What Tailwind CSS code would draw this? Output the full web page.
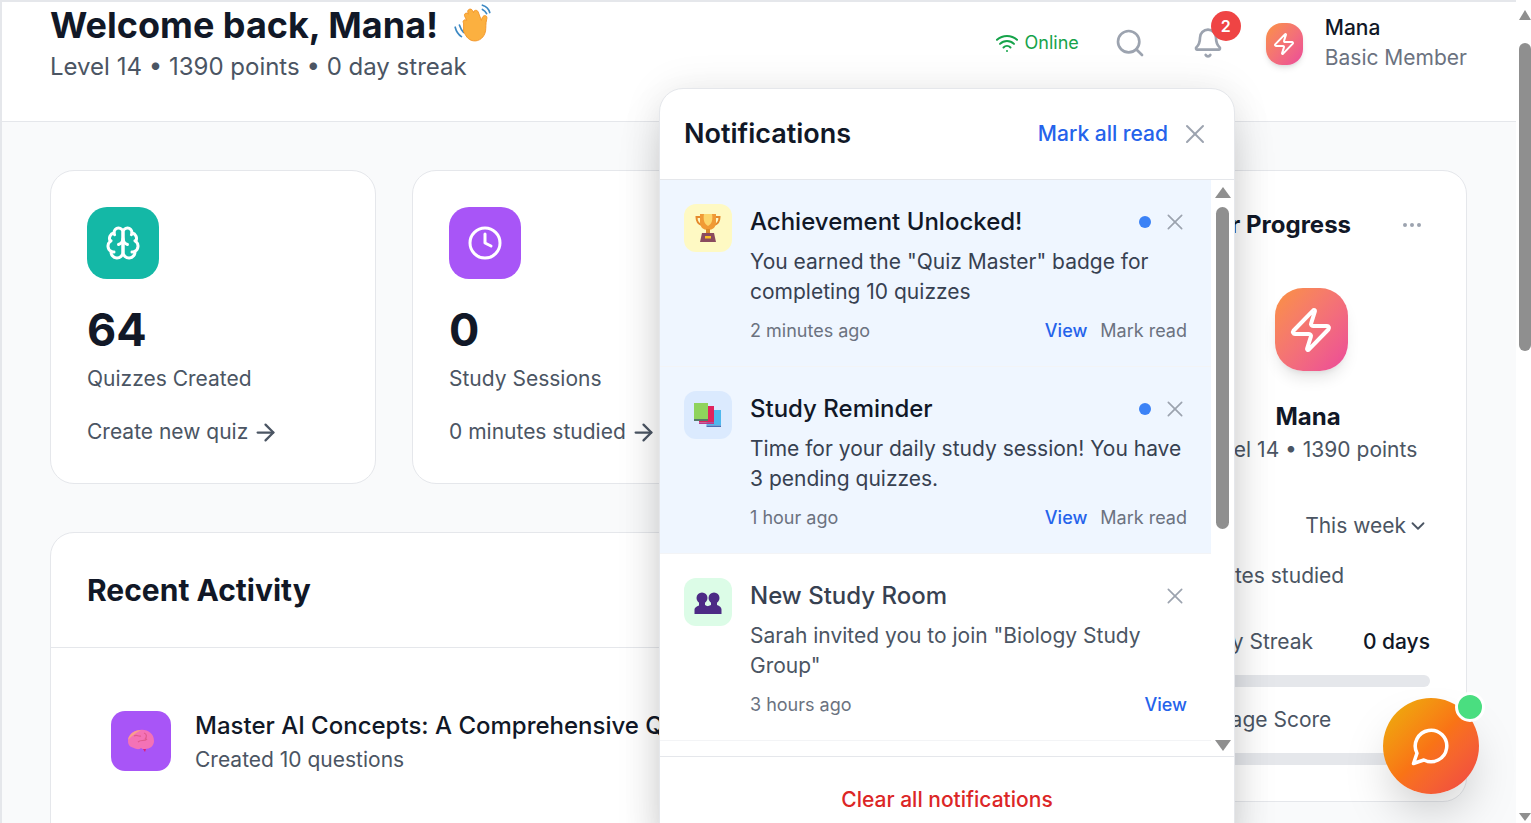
<!DOCTYPE html>
<html lang="en">

<head>
    <meta charset="UTF-8">
    <meta name="viewport" content="width=device-width, initial-scale=1.0">
    <title>Dashboard</title>
    <script src="https://cdn.jsdelivr.net/npm/@tailwindcss/browser@4"></script>
</head>

<body class="h-[823px] w-[1531px] overflow-hidden bg-white font-['Inter',sans-serif] text-[#111827]">
    <div class="relative flex h-[823px] w-[1531px] overflow-hidden">

        <!-- Main page -->
        <div class="h-[823px] w-[1516px] shrink-0 overflow-hidden border-t-2 border-l-2 border-t-[#e5e7eb] border-l-[#e5e7eb] bg-[#f9fafb]">
            <header class="flex h-[120px] items-start justify-between border-b border-[#e5e7eb] bg-white pr-[49px] pl-[48px]">
                <div>
                    <h1 class="flex h-[46px] items-center text-[36px] leading-[46px] font-bold text-[#111827]">
                        Welcome back, Mana!
                        <svg class="mt-[-5px] ml-[13px] h-[44px] w-[44px]" viewBox="0 0 42 42">
                            <path d="M4 25c1 4 3 7 6 9M8 23c1 3 2 5 4 7" fill="none" stroke="#3b88c3" stroke-width="1.6" stroke-linecap="round" />
                            <path d="M30 4c3 1 6 3 7 7M30 8c2 1 3 2 4 4" fill="none" stroke="#3b88c3" stroke-width="1.6" stroke-linecap="round" />
                            <path d="M12 21c-1.500-2 1-4 3-2.500l-2-4c-1-2.500 2-4 3.500-2l-.5-2c-.5-2.500 3-4 4.500-1.500l1 2c0-2.500 3.500-3 4.500-.5l3 8c.5-3 2-5 4-4.500 1.500.5 1.500 2 1 4-1 3.500-.5 7-1 10.500-1 6-6 10.500-12 9.500-5-1-7-5-9-9z" fill="#fbb040" stroke="#f19020" stroke-width=".8" />
                        </svg>
                    </h1>
                    <p class="mt-[-3px] text-[24px] leading-[44px] text-[#4b5563]">Level 14 • 1390 points • 0 day streak</p>
                </div>
                <div class="flex items-start pt-[6px]">
                    <div class="mt-[23px] flex items-center gap-[6px] text-[#16a34a]">
                        <svg class="h-[24px] w-[24px]" viewBox="0 0 24 24" fill="none" stroke="currentColor" stroke-width="2" stroke-linecap="round" stroke-linejoin="round">
                            <path d="M12 20h.01" />
                            <path d="M2 8.820a15 15 0 0 1 20 0" />
                            <path d="M5 12.859a10 10 0 0 1 14 0" />
                            <path d="M8.500 16.429a5 5 0 0 1 7 0" />
                        </svg>
                        <span class="text-[18px] leading-[24px]">Online</span>
                    </div>
                    <svg class="mt-[19px] ml-[35px] h-[32px] w-[32px] text-[#9ca3af]" viewBox="0 0 24 24" fill="none" stroke="currentColor" stroke-width="2" stroke-linecap="round" stroke-linejoin="round">
                        <path d="m21 21-4.340-4.340" />
                        <circle cx="11" cy="11" r="8" />
                    </svg>
                    <div class="relative mt-[19px] ml-[46px]">
                        <svg class="h-[32px] w-[32px] text-[#9ca3af]" viewBox="0 0 24 24" fill="none" stroke="currentColor" stroke-width="2" stroke-linecap="round" stroke-linejoin="round">
                            <path d="M10.268 21a2 2 0 0 0 3.464 0" />
                            <path d="M3.262 15.326A1 1 0 0 0 4 17h16a1 1 0 0 0 .74-1.673C19.410 13.956 18 12.499 18 8A6 6 0 0 0 6 8c0 4.499-1.411 5.956-2.738 7.326" />
                        </svg>
                        <span class="absolute top-[-16px] left-[19px] flex h-[30px] w-[30px] items-center justify-center rounded-full bg-[#ef4444] text-[16px] font-semibold text-white">2</span>
                    </div>
                    <div class="mt-[15px] ml-[42px] flex h-[42px] w-[37px] items-center justify-center rounded-[16px] bg-gradient-to-br from-[#fb923c] to-[#ec4899] shadow-md">
                        <svg class="h-[24px] w-[24px] text-white" viewBox="0 0 24 24" fill="none" stroke="currentColor" stroke-width="2" stroke-linecap="round" stroke-linejoin="round">
                            <path d="M4 14a1 1 0 0 1-.78-1.630l9.900-10.200a.5.5 0 0 1 .86.460l-1.920 6.020A1 1 0 0 0 13 10h7a1 1 0 0 1 .78 1.630l-9.900 10.200a.5.5 0 0 1-.86-.460l1.920-6.020A1 1 0 0 0 11 14z" />
                        </svg>
                    </div>
                    <div class="mt-[5px] ml-[22px]">
                        <p class="text-[21px] leading-[30px] font-medium text-[#111827]">Mana</p>
                        <p class="text-[21px] leading-[30px] text-[#6b7280]">Basic Member</p>
                    </div>
                </div>
            </header>

            <main class="grid grid-cols-[1063px_318px] gap-x-[36px] pt-[48px] pl-[48px]">
                <div>
                    <div class="grid grid-cols-[326px_326px_326px] gap-[36px]">
                        <div class="h-[314px] rounded-[24px] border border-[#e5e7eb] bg-white p-[36px]">
                            <div class="flex h-[72px] w-[72px] items-center justify-center rounded-[20px] bg-[#14b8a6]">
                                <svg class="h-[36px] w-[36px] text-white" viewBox="0 0 24 24" fill="none" stroke="currentColor" stroke-width="2" stroke-linecap="round" stroke-linejoin="round">
                                    <path d="M12 5a3 3 0 1 0-5.997.125 4 4 0 0 0-2.526 5.770 4 4 0 0 0 .556 6.588A4 4 0 1 0 12 18Z" />
                                    <path d="M12 5a3 3 0 1 1 5.997.125 4 4 0 0 1 2.526 5.770 4 4 0 0 1-.556 6.588A4 4 0 1 1 12 18Z" />
                                    <path d="M15 13a4.500 4.500 0 0 1-3-4 4.500 4.500 0 0 1-3 4" />
                                    <path d="M17.599 6.500a3 3 0 0 0 .399-1.375" />
                                    <path d="M6.003 5.125A3 3 0 0 0 6.401 6.500" />
                                    <path d="M3.477 10.896a4 4 0 0 1 .585-.396" />
                                    <path d="M19.938 10.500a4 4 0 0 1 .585.396" />
                                    <path d="M6 18a4 4 0 0 1-1.967-.516" />
                                    <path d="M19.967 17.484A4 4 0 0 1 18 18" />
                                </svg>
                            </div>
                            <p class="mt-[23px] text-[45px] leading-[56px] font-bold text-[#111827]">64</p>
                            <p class="mt-[6px] text-[21px] leading-[30px] text-[#4b5563]">Quizzes Created</p>
                            <div class="mt-[23px] flex items-center gap-[4px] text-[21px] leading-[30px] text-[#4b5563]">
                                Create new quiz
                                <svg class="h-[27px] w-[27px]" viewBox="0 0 24 24" fill="none" stroke="currentColor" stroke-width="2" stroke-linecap="round" stroke-linejoin="round">
                                    <path d="M5 12h14" />
                                    <path d="m12 5 7 7-7 7" />
                                </svg>
                            </div>
                        </div>
                        <div class="h-[314px] rounded-[24px] border border-[#e5e7eb] bg-white p-[36px]">
                            <div class="flex h-[72px] w-[72px] items-center justify-center rounded-[20px] bg-[#a855f7]">
                                <svg class="h-[36px] w-[36px] text-white" viewBox="0 0 24 24" fill="none" stroke="currentColor" stroke-width="2" stroke-linecap="round" stroke-linejoin="round">
                                    <circle cx="12" cy="12" r="10" />
                                    <path d="M12 6v6l4 2" />
                                </svg>
                            </div>
                            <p class="mt-[23px] text-[45px] leading-[56px] font-bold text-[#111827]">0</p>
                            <p class="mt-[6px] text-[21px] leading-[30px] text-[#4b5563]">Study Sessions</p>
                            <div class="mt-[23px] flex items-center gap-[4px] text-[21px] leading-[30px] text-[#4b5563]">
                                0 minutes studied
                                <svg class="h-[27px] w-[27px]" viewBox="0 0 24 24" fill="none" stroke="currentColor" stroke-width="2" stroke-linecap="round" stroke-linejoin="round">
                                    <path d="M5 12h14" />
                                    <path d="m12 5 7 7-7 7" />
                                </svg>
                            </div>
                        </div>
                        <div class="h-[314px] rounded-[24px] border border-[#e5e7eb] bg-white"></div>
                    </div>

                    <div class="mt-[48px] h-[400px] rounded-[24px] border border-[#e5e7eb] bg-white">
                        <div class="flex h-[115px] items-center border-b border-[#e5e7eb] px-[36px]">
                            <h2 class="text-[30px] leading-[36px] font-bold text-[#111827]">Recent Activity</h2>
                        </div>
                        <div class="flex items-start gap-[24px] pt-[63px] pl-[60px]">
                            <div class="flex h-[60px] w-[60px] items-center justify-center rounded-[14px] bg-[#a855f7]">
                                <svg class="h-[30px] w-[30px]" viewBox="0 0 30 30">
                                    <path d="M2 15c0-6 5-11 12-11 7-1 14 3 14 11 0 5-4 8-9 8l-1 0c-1 0-2 0-3-1-2 2-5 1-7 0-4-1-6-3-6-7z" fill="#f472b6" />
                                    <path d="M15 4c-6 0-12 4-13 10 3-3 6-6 13-10z" fill="#f9a08b" />
                                    <path d="M17 23l2 3 1-3z" fill="#e11d74" />
                                    <path d="M8 10c3-2 4 1 7 0M12 16c3-3 6 0 9-3M18 7c3 1 3 4 1 6" fill="none" stroke="#e05a8e" stroke-width="1.200" />
                                </svg>
                            </div>
                            <div class="mt-[-1px]">
                                <p class="text-[24px] leading-[32px] font-medium whitespace-nowrap text-[#111827]">Master AI Concepts: A Comprehensive Quiz</p>
                                <p class="mt-[3px] text-[21px] leading-[30px] text-[#4b5563]">Created 10 questions</p>
                            </div>
                        </div>
                    </div>
                </div>

                <aside class="h-[632px] rounded-[24px] border border-[#e5e7eb] bg-white px-[36px] pt-[36px]">
                    <div class="flex h-[36px] items-center justify-between">
                        <h2 class="text-[24px] leading-[36px] font-bold whitespace-nowrap text-[#111827]">Your Progress</h2>
                        <svg class="mr-[6px] h-[24px] w-[24px] text-[#9ca3af]" viewBox="0 0 24 24" fill="none" stroke="currentColor" stroke-width="2" stroke-linecap="round" stroke-linejoin="round">
                            <circle cx="12" cy="12" r="1" />
                            <circle cx="19" cy="12" r="1" />
                            <circle cx="5" cy="12" r="1" />
                        </svg>
                    </div>
                    <div class="mt-[45px] flex flex-col items-center">
                        <div class="ml-[6px] flex h-[83px] w-[73px] items-center justify-center rounded-[28px] bg-gradient-to-br from-[#fb923c] to-[#ec4899] shadow-lg">
                            <svg class="h-[48px] w-[48px] text-white" viewBox="0 0 24 24" fill="none" stroke="currentColor" stroke-width="2" stroke-linecap="round" stroke-linejoin="round">
                                <path d="M4 14a1 1 0 0 1-.78-1.630l9.900-10.200a.5.5 0 0 1 .86.460l-1.920 6.020A1 1 0 0 0 13 10h7a1 1 0 0 1 .78 1.630l-9.900 10.200a.5.5 0 0 1-.86-.460l1.920-6.020A1 1 0 0 0 11 14z" />
                            </svg>
                        </div>
                        <p class="mt-[28px] text-[24px] leading-[36px] font-bold text-[#111827]">Mana</p>
                        <p class="text-[21px] leading-[30px] whitespace-nowrap text-[#4b5563]">Level 14 • 1390 points</p>
                    </div>
                    <div class="mt-[46px] flex items-center justify-end gap-[1px] pr-[1px] text-[21px] leading-[30px] text-[#4b5563]">
                        This week
                        <svg class="h-[22px] w-[22px]" viewBox="0 0 24 24" fill="none" stroke="currentColor" stroke-width="2" stroke-linecap="round" stroke-linejoin="round">
                            <path d="m6 9 6 6 6-6" />
                        </svg>
                    </div>
                    <p class="mt-[20px] text-[21px] leading-[30px] text-[#4b5563]">Minutes studied</p>
                    <div class="mt-[36px] flex items-center justify-between text-[21px] leading-[30px]">
                        <span class="text-[#4b5563]">Study Streak</span>
                        <span class="font-medium text-[#111827]">0 days</span>
                    </div>
                    <div class="mt-[18px] h-[12px] rounded-full bg-[#e5e7eb]"></div>
                    <p class="mt-[18px] text-[21px] leading-[30px] text-[#4b5563]">Average Score</p>
                    <div class="mt-[18px] h-[12px] rounded-full bg-[#e5e7eb]"></div>
                </aside>
            </main>
        </div>

        <!-- Page scrollbar -->
        <div class="flex w-[15px] shrink-0 flex-col items-center bg-white pt-[10px] pl-[3px]">
            <span class="h-0 w-0 border-x-[6px] border-b-[10px] border-x-transparent border-b-[#8f8f8f]"></span>
            <span class="mt-[23px] h-[308px] w-[12px] rounded-full bg-[#8f8f8f]"></span>
            <span class="mt-[462px] h-0 w-0 border-x-[6px] border-t-[8px] border-x-transparent border-t-[#8f8f8f]"></span>
        </div>

        <!-- Notifications dropdown -->
        <div class="absolute top-[88px] left-[659px] flex h-[760px] w-[576px] flex-col overflow-hidden rounded-[24px] border border-[#e5e7eb] bg-white shadow-[0_25px_50px_-12px_rgba(0,0,0,0.25),0_0_40px_rgba(0,0,0,0.08)]">
            <div class="flex h-[91px] shrink-0 items-center justify-between border-b border-[#e5e7eb] pr-[27px] pl-[24px]">
                <h3 class="text-[27px] leading-[36px] font-semibold text-[#111827]">Notifications</h3>
                <div class="flex items-center gap-[15px]">
                    <span class="text-[21px] leading-[30px] font-medium text-[#2563eb]">Mark all read</span>
                    <svg class="h-[24px] w-[24px] text-[#9ca3af]" viewBox="0 0 24 24" fill="none" stroke="currentColor" stroke-width="2" stroke-linecap="round" stroke-linejoin="round">
                        <path d="M20 4 4 20" />
                        <path d="m4 4 16 16" />
                    </svg>
                </div>
            </div>

            <div class="flex h-[576px] shrink-0 overflow-hidden">
                <div class="w-[551px] shrink-0">
                    <!-- Achievement -->
                    <div class="flex h-[187px] gap-[18px] border-b border-[#f3f4f6] bg-[#eff6ff] p-[24px]">
                        <div class="flex h-[48px] w-[48px] shrink-0 items-center justify-center rounded-[12px] bg-[#fef9c3]">
                            <svg class="h-[30px] w-[30px]" viewBox="0 0 30 30">
                                <path d="M8 4H3.500c0 4 1.500 7 5.500 8M22 4h4.500c0 4-1.500 7-5.500 8" fill="none" stroke="#e58a2c" stroke-width="2" />
                                <path d="M7 1h16v8c0 5-3 8-8 8s-8-3-8-8z" fill="#f09a35" />
                                <path d="M11 1c-1 5 0 10 4 12 4-2 5-7 4-12z" fill="#fcd56b" />
                                <rect x="13" y="16" width="4" height="6" fill="#d98a2b" />
                                <path d="M9 20h12l2 9H7z" fill="#8a4b5e" />
                                <rect x="12" y="23" width="6" height="2.500" fill="#fbbf24" />
                            </svg>
                        </div>
                        <div class="min-w-0 flex-1">
                            <div class="flex h-[36px] items-center">
                                <p class="flex-1 text-[24px] leading-[36px] font-medium text-[#111827]">Achievement Unlocked!</p>
                                <span class="h-[12px] w-[12px] rounded-full bg-[#3b82f6]"></span>
                                <svg class="mr-[2px] ml-[14px] h-[20px] w-[20px] text-[#9ca3af]" viewBox="0 0 24 24" fill="none" stroke="currentColor" stroke-width="2" stroke-linecap="round" stroke-linejoin="round">
                                    <path d="M20 4 4 20" />
                                    <path d="m4 4 16 16" />
                                </svg>
                            </div>
                            <p class="mt-[7px] text-[21px] leading-[30px] text-[#374151]">You earned the "Quiz Master" badge for completing 10 quizzes</p>
                            <div class="mt-[8px] flex h-[30px] items-center justify-between text-[18px]">
                                <span class="text-[#6b7280]">2 minutes ago</span>
                                <span class="flex gap-[13px]"><span class="font-medium text-[#2563eb]">View</span><span class="text-[#6b7280]">Mark read</span></span>
                            </div>
                        </div>
                    </div>
                    <!-- Reminder -->
                    <div class="flex h-[187px] gap-[18px] border-b border-[#f3f4f6] bg-[#eff6ff] p-[24px]">
                        <div class="flex h-[48px] w-[48px] shrink-0 items-center justify-center rounded-[12px] bg-[#dbeafe]">
                            <svg class="h-[30px] w-[30px]" viewBox="0 0 30 30">
                                <path d="M13.500 10H28v15.500H13.500z" fill="#4fb8ee" />
                                <path d="M13.500 25.500H28V27H13.500z" fill="#4a6fb5" />
                                <path d="M6 6h15v16.500H6z" fill="#e0245e" />
                                <path d="M6 22.500h15V24H6z" fill="#b83b8b" />
                                <path d="M1 3h14v16H1z" fill="#8fd35c" />
                                <path d="M1 19h14v2H1z" fill="#55786a" />
                            </svg>
                        </div>
                        <div class="min-w-0 flex-1">
                            <div class="flex h-[36px] items-center">
                                <p class="flex-1 text-[24px] leading-[36px] font-medium text-[#111827]">Study Reminder</p>
                                <span class="h-[12px] w-[12px] rounded-full bg-[#3b82f6]"></span>
                                <svg class="mr-[2px] ml-[14px] h-[20px] w-[20px] text-[#9ca3af]" viewBox="0 0 24 24" fill="none" stroke="currentColor" stroke-width="2" stroke-linecap="round" stroke-linejoin="round">
                                    <path d="M20 4 4 20" />
                                    <path d="m4 4 16 16" />
                                </svg>
                            </div>
                            <p class="mt-[7px] text-[21px] leading-[30px] text-[#374151]">Time for your daily study session! You have 3 pending quizzes.</p>
                            <div class="mt-[8px] flex h-[30px] items-center justify-between text-[18px]">
                                <span class="text-[#6b7280]">1 hour ago</span>
                                <span class="flex gap-[13px]"><span class="font-medium text-[#2563eb]">View</span><span class="text-[#6b7280]">Mark read</span></span>
                            </div>
                        </div>
                    </div>
                    <!-- Study room -->
                    <div class="flex h-[187px] gap-[18px] border-b border-[#f3f4f6] bg-white p-[24px]">
                        <div class="flex h-[48px] w-[48px] shrink-0 items-center justify-center rounded-[12px] bg-[#dcfce7]">
                            <svg class="h-[30px] w-[30px]" viewBox="0 0 30 30" fill="#4c2a85">
                                <circle cx="9" cy="11" r="5.500" />
                                <circle cx="21" cy="11" r="5.500" />
                                <path d="M6 15h6v3l3 1.500v7.500H1.500v-4.500c0-2 2-3 4.500-4z" />
                                <path d="M18 15h6v3c2.500 1 4.500 2 4.500 4.500V27H14v-7.500l4-1.500z" />
                            </svg>
                        </div>
                        <div class="min-w-0 flex-1">
                            <div class="flex h-[36px] items-center">
                                <p class="flex-1 text-[24px] leading-[36px] font-medium text-[#374151]">New Study Room</p>
                                <svg class="mr-[2px] ml-[14px] h-[20px] w-[20px] text-[#9ca3af]" viewBox="0 0 24 24" fill="none" stroke="currentColor" stroke-width="2" stroke-linecap="round" stroke-linejoin="round">
                                    <path d="M20 4 4 20" />
                                    <path d="m4 4 16 16" />
                                </svg>
                            </div>
                            <p class="mt-[7px] text-[21px] leading-[30px] text-[#4b5563]">Sarah invited you to join "Biology Study Group"</p>
                            <div class="mt-[8px] flex h-[30px] items-center justify-between text-[18px]">
                                <span class="text-[#6b7280]">3 hours ago</span>
                                <span class="font-medium text-[#2563eb]">View</span>
                            </div>
                        </div>
                    </div>
                </div>
                <!-- Panel scrollbar -->
                <div class="flex w-[23px] shrink-0 flex-col items-center bg-white pt-[7px]">
                    <span class="h-0 w-0 border-x-[8px] border-b-[11px] border-x-transparent border-b-[#8f8f8f]"></span>
                    <span class="mt-[9px] h-[322px] w-[13px] rounded-full bg-[#8f8f8f]"></span>
                    <span class="mt-[211px] h-0 w-0 border-x-[8px] border-t-[11px] border-x-transparent border-t-[#8f8f8f]"></span>
                </div>
            </div>

            <div class="flex h-[88px] shrink-0 items-center justify-center border-t border-[#e5e7eb] pb-[2px]">
                <span class="text-[21px] leading-[30px] font-medium text-[#dc2626]">Clear all notifications</span>
            </div>
        </div>

        <!-- Chat button -->
        <div class="absolute top-[698px] left-[1383px] flex h-[96px] w-[96px] items-center justify-center rounded-full bg-gradient-to-br from-[#eab308] via-[#f97316] to-[#ef4444] shadow-2xl">
            <svg class="h-[42px] w-[42px] text-white" viewBox="0 0 24 24" fill="none" stroke="currentColor" stroke-width="2" stroke-linecap="round" stroke-linejoin="round">
                <path d="M7.900 20A9 9 0 1 0 4 16.100L2 22Z" />
            </svg>
            <span class="absolute top-[-6px] right-[-6px] h-[30px] w-[30px] rounded-full border-[3px] border-white bg-[#4ade80]"></span>
        </div>
    </div>
</body>

</html>
